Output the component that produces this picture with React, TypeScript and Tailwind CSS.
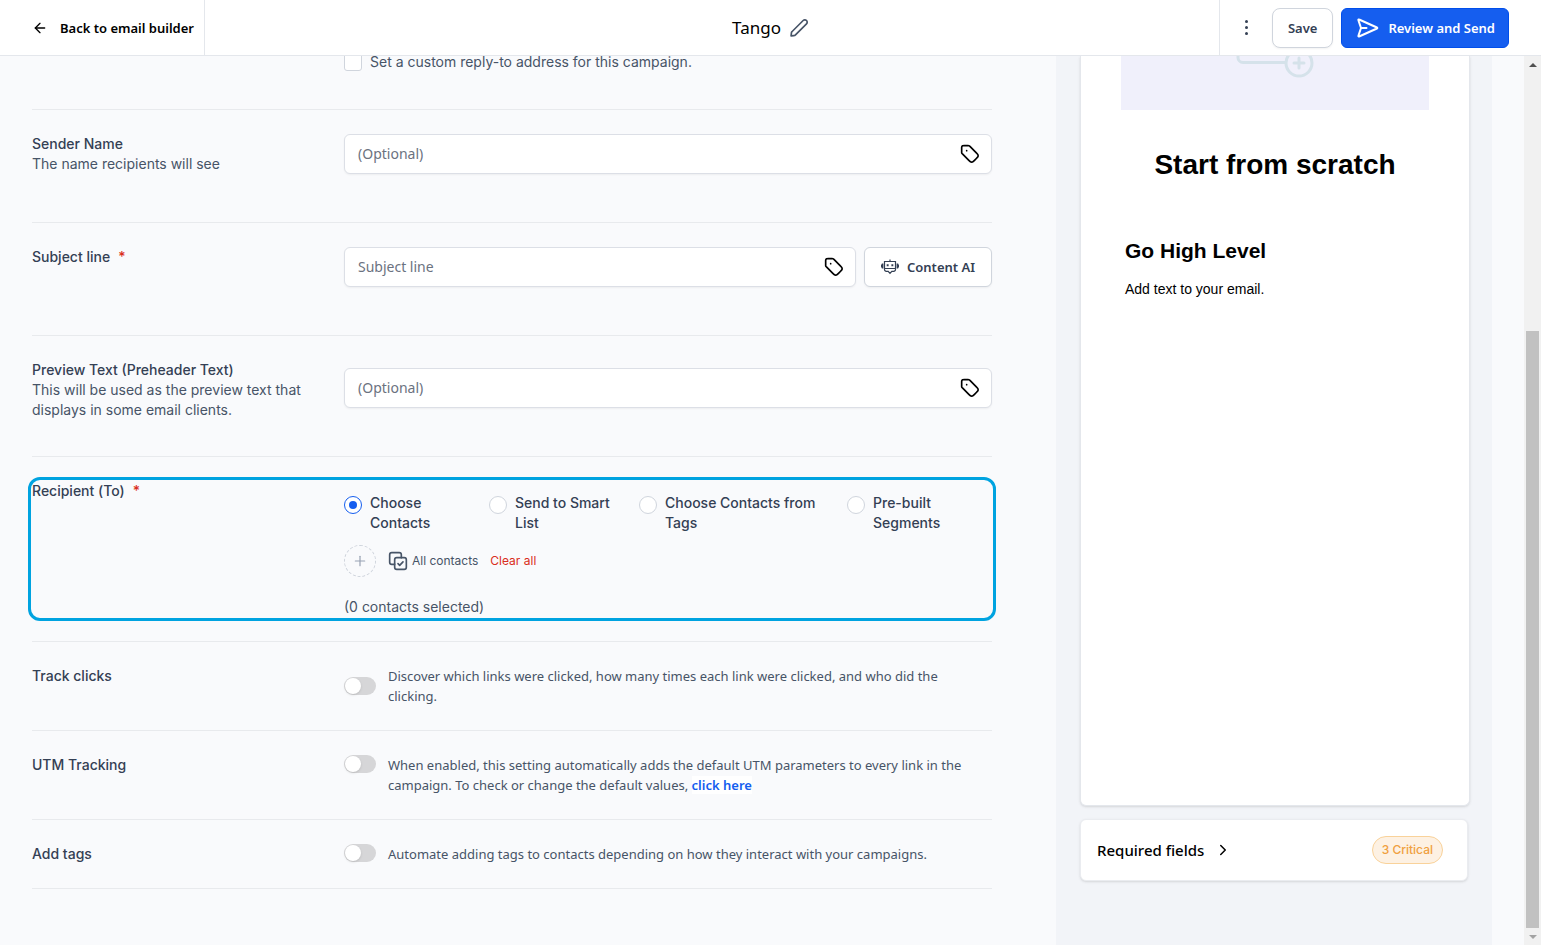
import React from "react";
import type { ReactNode } from "react";
import { ArrowLeft, ChevronRight, Plus } from "lucide-react";

const SEGOE = "font-['Noto_Sans','Open_Sans',sans-serif]";

function TagIcon() {
  return (
    <svg viewBox="0 0 24 24" className="size-5" fill="none" stroke="currentColor" strokeWidth="2" strokeLinecap="round" strokeLinejoin="round" aria-hidden="true">
      <path d="M8 8h.01M2 5.2v4.475c0 .489 0 .733.055.963.05.204.13.4.24.579.123.201.296.374.642.72l7.669 7.669c1.188 1.188 1.782 1.782 2.467 2.004a3 3 0 0 0 1.854 0c.685-.222 1.28-.816 2.467-2.004l2.212-2.212c1.188-1.188 1.782-1.782 2.004-2.467a3 3 0 0 0 0-1.854c-.222-.685-.816-1.28-2.004-2.467l-7.669-7.669c-.346-.346-.519-.519-.72-.642a2 2 0 0 0-.579-.24C10.408 2 10.163 2 9.675 2H5.2c-1.12 0-1.68 0-2.108.218a2 2 0 0 0-.874.874C2 3.52 2 4.08 2 5.2Z" />
    </svg>
  );
}

function PencilIcon() {
  return (
    <svg viewBox="0 0 24 24" className="size-5 text-[#475467]" fill="none" stroke="currentColor" strokeWidth="2" strokeLinecap="round" strokeLinejoin="round" aria-hidden="true">
      <path d="M2.876 18.116c.046-.414.069-.62.131-.814a2 2 0 0 1 .234-.485c.111-.17.258-.317.553-.61L17 3a2.828 2.828 0 1 1 4 4L7.794 20.206c-.294.294-.442.441-.611.553a2 2 0 0 1-.485.233c-.194.063-.4.086-.814.132L2.5 21.5l.376-3.384Z" />
    </svg>
  );
}

function SendIcon() {
  return (
    <svg viewBox="0 0 24 24" className="size-6" fill="none" stroke="currentColor" strokeWidth="2" strokeLinecap="round" strokeLinejoin="round" aria-hidden="true">
      <path d="M10.5 12H5m-.084.292L2.58 19.267c-.183.548-.275.822-.21.99a.5.5 0 0 0 .332.3c.174.049.438-.07.965-.307l16.711-7.52c.515-.232.772-.348.851-.508a.5.5 0 0 0 0-.444c-.08-.16-.336-.276-.85-.508L3.661 3.748c-.525-.237-.788-.355-.962-.307a.5.5 0 0 0-.332.299c-.066.168.025.442.206.988l2.342 7.057c.032.094.047.141.053.189a.5.5 0 0 1 0 .128c-.006.048-.022.095-.053.19Z" />
    </svg>
  );
}

function RobotIcon() {
  return (
    <svg viewBox="0 0 18 16" className="h-4 w-[18px]" fill="none" stroke="currentColor" strokeWidth="1.2" aria-hidden="true">
      <path d="M9 .5V2.500M3.500 2.500h11v8a1.800 1.800 0 0 1-1.800 1.800h-1.900L9 14.300l-1.800-2H5.300a1.800 1.800 0 0 1-1.800-1.800ZM3.500 9.500h11" />
      <path d="M1.600 4.500v5M16.400 4.500v5" strokeWidth="1.600" />
      <path d="M.5 5.500v3M17.500 5.500v3" strokeWidth="1" />
      <path d="M5.700 6.200h1.900M10.400 6.200h1.900" strokeWidth="2" />
    </svg>
  );
}

function CopyCheckIcon() {
  return (
    <svg viewBox="0 0 24 24" className="size-5" fill="none" stroke="currentColor" strokeWidth="2" strokeLinecap="round" strokeLinejoin="round" aria-hidden="true">
      <path d="M8 16H4.500A2.500 2.500 0 0 1 2 13.500v-9A2.500 2.500 0 0 1 4.500 2h9A2.500 2.500 0 0 1 16 4.500V8" />
      <rect x="8" y="8" width="14" height="14" rx="2.500" />
      <path d="m12 15.200 2 2 4-4.200" />
    </svg>
  );
}

function FlowArt() {
  return (
    <svg viewBox="0 0 308 54" className="block h-[54px] w-full" preserveAspectRatio="xMidYMin slice" fill="none" stroke="#d5e2ea" strokeWidth="3" strokeLinecap="round" aria-hidden="true">
      <path d="M117 0v1.500a5 5 0 0 0 5 5h42" />
      <circle cx="178" cy="7" r="13" />
      <path d="M173 7h10M178 2v10" />
    </svg>
  );
}

function Label({ htmlFor, required, children }: { htmlFor?: string; required?: boolean; children: ReactNode }) {
  return (
    <label htmlFor={htmlFor} className="block font-medium text-[#344054]">
      {children}
      {required && <span className="ml-2 text-[#d92d20]">*</span>}
    </label>
  );
}

const FIELD = "flex h-10 flex-1 items-center rounded-md border border-[#dcdfe6] bg-white pr-[11px] pl-[13px] shadow-xs";

function TagInput({ id, placeholder }: { id: string; placeholder: string }) {
  return (
    <div className={FIELD}>
      <input id={id} type="text" placeholder={placeholder} className={`min-w-0 flex-1 bg-transparent text-sm outline-none placeholder:text-[#6b7280] ${SEGOE}`} />
      <button type="button" aria-label="Insert custom value" className="text-black">
        <TagIcon />
      </button>
    </div>
  );
}

function Row({ children, className }: { children: ReactNode; className: string }) {
  return <section className={`grid grid-cols-[312px_minmax(0,1fr)] border-b border-[#e8eaed] ${className}`}>{children}</section>;
}

function Toggle({ id }: { id: string }) {
  return (
    <input
      id={id}
      type="checkbox"
      role="switch"
      className="flex h-[18px] w-8 shrink-0 appearance-none items-center rounded-full bg-[#d6d6d8] before:ml-px before:size-4 before:rounded-full before:bg-white before:shadow-sm"
    />
  );
}

function Hint({ children }: { children: ReactNode }) {
  return <p className={`pr-4 text-[13px] leading-5 text-[#475467] ${SEGOE}`}>{children}</p>;
}

function RadioOption({ id, label, checked }: { id: string; label: string; checked?: boolean }) {
  return (
    <div className="flex items-start gap-2 pr-5">
      <input
        id={id}
        name="recipient"
        type="radio"
        defaultChecked={checked}
        className="mt-[3px] flex size-[18px] shrink-0 appearance-none items-center justify-center rounded-full border border-[#d0d5dd] bg-white checked:border-[#155eef] checked:before:size-2 checked:before:rounded-full checked:before:bg-[#155eef]"
      />
      <label htmlFor={id} className="font-medium text-[#344054]">{label}</label>
    </div>
  );
}

function Header() {
  return (
    <header className={`relative z-10 grid h-14 shrink-0 grid-cols-[1fr_auto_1fr] border-b border-[#e4e7ec] bg-white ${SEGOE}`}>
      <div className="flex">
        <a href="#builder" className="flex items-center gap-3 border-r border-[#e4e7ec] pr-[10px] pl-8 text-[13px] font-semibold text-black">
          <ArrowLeft className="size-4" />
          Back to email builder
        </a>
      </div>
      <div className="flex items-center gap-2">
        <h1 className="text-[17px] text-black">Tango</h1>
        <button type="button" aria-label="Rename campaign"><PencilIcon /></button>
      </div>
      <div className="flex items-center justify-end pr-8">
        <div className="flex h-full items-center border-l border-[#e4e7ec] pr-[14px] pl-4">
          <button type="button" aria-label="More options" className="flex w-[22px] flex-col items-center gap-[3px]">
            <span className="size-[3px] rounded-full bg-[#344054]" />
            <span className="size-[3px] rounded-full bg-[#344054]" />
            <span className="size-[3px] rounded-full bg-[#344054]" />
          </button>
        </div>
        <button type="button" className="mr-2 h-10 rounded-lg border border-[#d0d5dd] bg-white px-[15px] text-[13px] font-semibold text-[#344054] shadow-xs">Save</button>
        <button type="button" className="flex h-10 items-center gap-2 rounded-md border border-[#004eeb] bg-[#155eef] pr-[13px] pl-[14px] text-[13px] font-semibold text-white">
          <SendIcon />
          Review and Send
        </button>
      </div>
    </header>
  );
}

function SettingsForm() {
  return (
    <form className="min-w-0 flex-1 pr-16 pl-8">
      <Row className="pb-[37px]">
        <span />
        <div className="-mt-1 flex items-center gap-2">
          <input id="reply-to" type="checkbox" className="size-[18px] appearance-none rounded-[3px] border border-[#d0d5dd] bg-white" />
          <label htmlFor="reply-to" className="text-[#475467]">Set a custom reply-to address for this campaign.</label>
        </div>
      </Row>
      <Row className="pt-6 pb-12">
        <div>
          <Label htmlFor="sender">Sender Name</Label>
          <p className="text-[#475467]">The name recipients will see</p>
        </div>
        <div className="flex"><TagInput id="sender" placeholder="(Optional)" /></div>
      </Row>
      <Row className="pt-6 pb-12">
        <Label htmlFor="subject" required>Subject line</Label>
        <div className="flex gap-2">
          <TagInput id="subject" placeholder="Subject line" />
          <button type="button" className={`flex h-10 w-32 items-center justify-center gap-2 rounded-md border border-[#d0d5dd] bg-white text-[13px] font-semibold text-[#344054] shadow-xs ${SEGOE}`}>
            <RobotIcon />
            Content AI
          </button>
        </div>
      </Row>
      <Row className="pt-6 pb-9">
        <div>
          <Label htmlFor="preview">Preview Text (Preheader Text)</Label>
          <p className="pr-6 text-[#475467]">This will be used as the preview text that displays in some email clients.</p>
        </div>
        <div className="mt-2 flex"><TagInput id="preview" placeholder="(Optional)" /></div>
      </Row>

      <section className="border-b border-[#e8eaed] py-5">
        <div className="-mx-1 grid grid-cols-[312px_minmax(0,1fr)] rounded-xl border-[3px] border-[#00a3e0] px-px py-px">
          <Label required>Recipient (To)</Label>
          <div className="pt-3">
            <div role="radiogroup" aria-label="Recipient (To)" className="grid grid-cols-[145fr_150fr_208fr_145fr]">
              <RadioOption id="to-contacts" label="Choose Contacts" checked />
              <RadioOption id="to-smart" label="Send to Smart List" />
              <RadioOption id="to-tags" label="Choose Contacts from Tags" />
              <RadioOption id="to-segments" label="Pre-built Segments" />
            </div>
            <div className="mt-3 flex items-center gap-3 text-xs">
              <button type="button" aria-label="Add contact" className="flex size-8 items-center justify-center rounded-full border border-dashed border-[#cfd4dc] text-[#98a2b3]">
                <Plus className="size-4" strokeWidth={1.8} />
              </button>
              <button type="button" className="flex items-center gap-1 text-[#475467]">
                <CopyCheckIcon />
                All contacts
              </button>
              <button type="button" className="text-[#d92d20]">Clear all</button>
            </div>
            <p className="mt-5 text-[#475467]">(0 contacts selected)</p>
          </div>
        </div>
      </section>

      <Row className="py-6">
        <Label htmlFor="track">Track clicks</Label>
        <div className="flex items-center gap-3">
          <Toggle id="track" />
          <Hint>Discover which links were clicked, how many times each link were clicked, and who did the clicking.</Hint>
        </div>
      </Row>
      <Row className="py-6">
        <Label htmlFor="utm">UTM Tracking</Label>
        <div className="flex items-start gap-3">
          <Toggle id="utm" />
          <Hint>
            When enabled, this setting automatically adds the default UTM parameters to every link in the campaign. To check or change the default values,{" "}
            <a href="#utm" className="bg-white font-semibold text-[#155eef]">click here</a>
          </Hint>
        </div>
      </Row>
      <Row className="py-6">
        <Label htmlFor="tags">Add tags</Label>
        <div className="flex items-start gap-3">
          <Toggle id="tags" />
          <Hint>Automate adding tags to contacts depending on how they interact with your campaigns.</Hint>
        </div>
      </Row>
    </form>
  );
}

function PreviewPanel() {
  return (
    <aside className="mr-8 flex w-[436px] shrink-0 flex-col bg-[#f2f4f8] pb-16 pl-6">
      <div className="min-h-[750px] w-[390px] rounded-b-md border border-t-0 border-[#e4e7ec] bg-white px-10 font-['Liberation_Sans',Arial,sans-serif] text-black shadow-sm">
        <div className="bg-[#f0f0fb]"><FlowArt /></div>
        <h2 className="mt-[37px] text-center text-[28px] leading-9 font-bold">Start from scratch</h2>
        <div className="px-1">
          <h3 className="mt-[54px] text-[21px] leading-7 font-bold">Go High Level</h3>
          <p className="mt-[14px] text-sm leading-5">Add text to your email.</p>
        </div>
      </div>
      <div className="mt-[13px] flex w-[388px] items-center justify-between rounded-md border border-[#eaecf0] bg-white py-4 pr-6 pl-4 shadow-sm">
        <button type="button" className={`flex items-center gap-[10px] text-[15px] font-medium text-black ${SEGOE}`}>
          Required fields
          <ChevronRight className="size-[18px]" />
        </button>
        <span className="flex h-7 items-center rounded-full border border-[#f9d29a] bg-[#fdf1e3] px-[9px] text-xs font-medium text-[#f0a040]">3 Critical</span>
      </div>
    </aside>
  );
}

function ScrollBar() {
  return (
    <div aria-hidden="true" className="flex w-[17px] shrink-0 flex-col items-center bg-[#f1f1f1]">
      <span className="flex h-[17px] items-center"><span className="border-x-4 border-b-4 border-x-transparent border-b-[#505050]" /></span>
      <span className="h-[258px] shrink" />
      <span className="w-[13px] flex-1 bg-[#c1c1c1]" />
      <span className="flex h-[17px] items-center"><span className="border-x-4 border-t-4 border-x-transparent border-t-[#a3a3a3]" /></span>
    </div>
  );
}

export default function App() {
  return (
    <div className="flex h-screen flex-col overflow-hidden bg-[#f9fafc] font-['Inter',sans-serif] text-sm leading-5">
      <Header />
      <main className="flex min-h-0 flex-1">
        <SettingsForm />
        <PreviewPanel />
        <ScrollBar />
      </main>
    </div>
  );
}
